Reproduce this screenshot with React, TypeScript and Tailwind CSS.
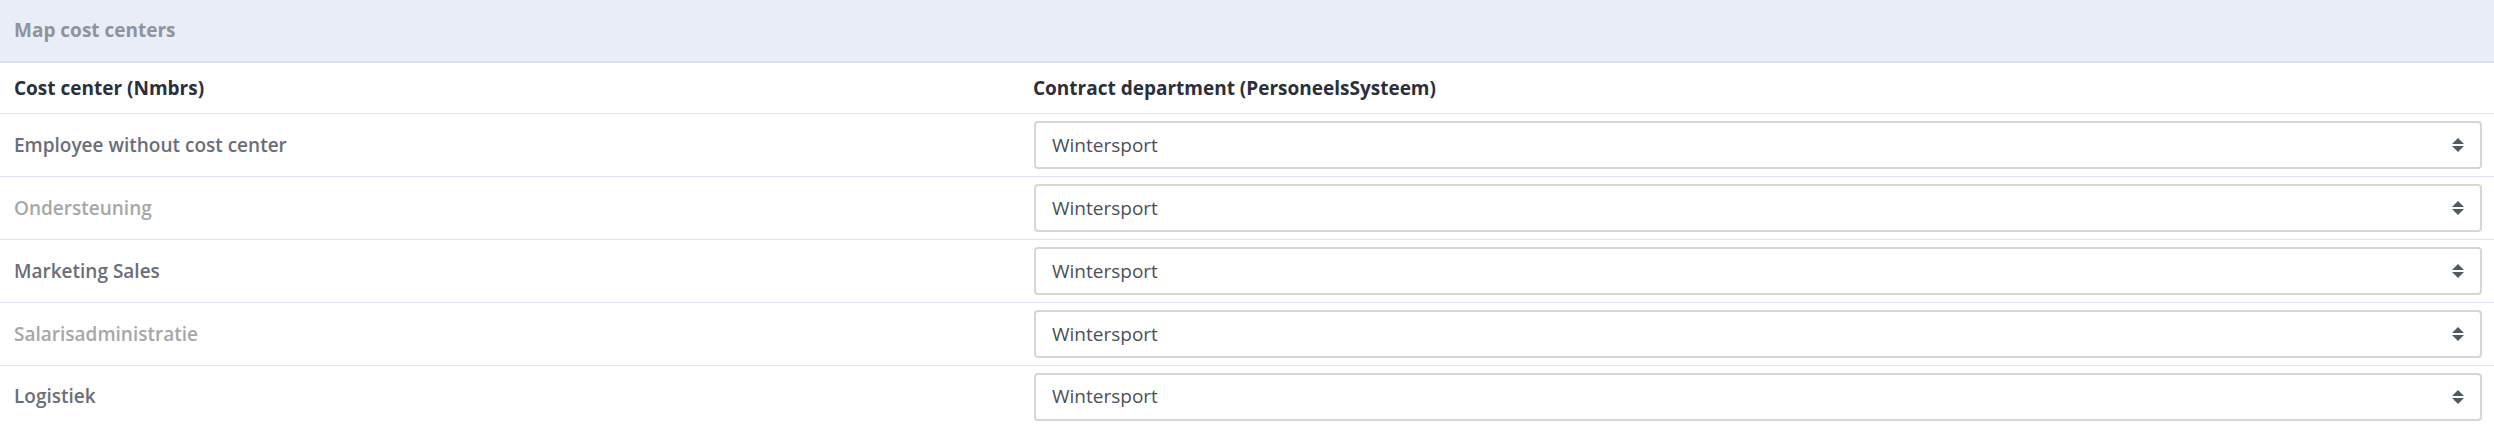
import React from "react";

const rows = [
  { label: "Employee without cost center", muted: false },
  { label: "Ondersteuning", muted: true },
  { label: "Marketing Sales", muted: false },
  { label: "Salarisadministratie", muted: true },
  { label: "Logistiek", muted: false },
];

function SortIcon() {
  return (
    <svg width="12" height="14" viewBox="0 0 12 14" className="shrink-0">
      <path d="M6 0 L12 6 L0 6 Z" fill="#4f5b63" />
      <path d="M0 8 L12 8 L6 14 Z" fill="#4f5b63" />
    </svg>
  );
}

export default function App() {
  return (
    <div className="w-full bg-white font-['Open_Sans',sans-serif]">
      <div className="h-[63px] bg-[#e9edf7] border-b-2 border-[#dae1ef] px-[14px] flex items-center">
        <span className="text-[19px] font-bold text-[#8f939c]">Map cost centers</span>
      </div>
      <div className="grid grid-cols-[1021px_1fr] h-[51px] border-b border-[#dde3ef] items-center">
        <div className="pl-[14px] text-[19px] font-bold text-[#2b2f3b]">Cost center (Nmbrs)</div>
        <div className="pl-[12px] text-[19px] font-bold text-[#2b2f3b]">Contract department (PersoneelsSysteem)</div>
      </div>
      {rows.map((r, i) => (
        <div
          key={r.label}
          className={
            "grid grid-cols-[1021px_1fr] items-center " +
            (i === rows.length - 1 ? "h-[61px]" : "h-[63px] border-b border-[#dde3ef]")
          }
        >
          <div
            className={
              "pl-[14px] text-[19px] font-semibold " +
              (r.muted ? "text-[#a7a7a7]" : "text-[#6b6e76]")
            }
          >
            {r.label}
          </div>
          <div className="pl-[13px] pr-[12px]">
            <div className="h-[48px] border-2 border-[#d6d6d6] rounded-[4px] bg-white flex items-center justify-between pl-[16px] pr-[16px]">
              <span className="text-[19px] text-[#4b4f57]">Wintersport</span>
              <SortIcon />
            </div>
          </div>
        </div>
      ))}
    </div>
  );
}
